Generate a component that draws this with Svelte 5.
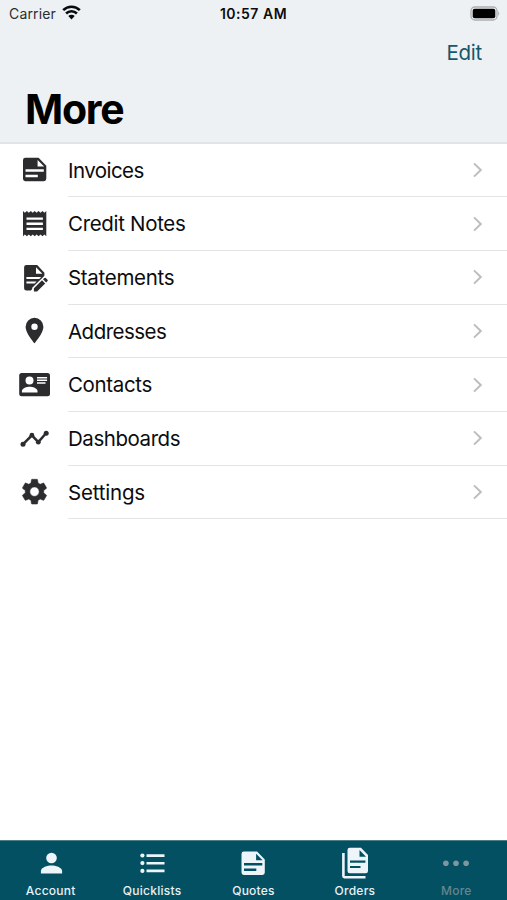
<script lang="ts">
	type Item = { id: string; label: string; spacing: number };

	const items: Item[] = [
		{ id: 'invoice', label: 'Invoices', spacing: -0.55 },
		{ id: 'receipt', label: 'Credit Notes', spacing: -0.32 },
		{ id: 'statement', label: 'Statements', spacing: -0.3 },
		{ id: 'pin', label: 'Addresses', spacing: -0.53 },
		{ id: 'contact', label: 'Contacts', spacing: -0.35 },
		{ id: 'chart', label: 'Dashboards', spacing: -0.45 },
		{ id: 'gear', label: 'Settings', spacing: -0.2 }
	];

	const tabs = [
		{ id: 'account', label: 'Account' },
		{ id: 'quicklists', label: 'Quicklists' },
		{ id: 'quotes', label: 'Quotes' },
		{ id: 'orders', label: 'Orders' },
		{ id: 'more', label: 'More' }
	];

	let active = $state('more');
</script>

{#snippet page()}
	<path
		fill-rule="evenodd"
		d="M2.5 0H15.6L23.3 7.9V21a2.4 2.4 0 0 1-2.4 2.4H2.5A2.4 2.4 0 0 1 0 21V2.4A2.4 2.4 0 0 1 2.5 0ZM14.6 2.2V8.7h6.5ZM2.5 11.4v2.5h18.3v-2.5ZM2.5 17v2.5h12.3V17Z"
	/>
{/snippet}

<div class="screen">
	<header>
		<div class="status">
			<div class="carrier">
				<span>Carrier</span>
				<svg width="19" height="15" viewBox="0 0 19 15">
					<g fill="none" stroke="#080a0c" stroke-width="2.6">
						<path d="M1.2 5.1a11.8 11.8 0 0 1 16.6 0" />
						<path d="M4.1 8.5a7.6 7.6 0 0 1 10.8 0" />
					</g>
					<path d="M6.3 11a4.6 4.6 0 0 1 6.4 0L9.5 14.4Z" fill="#080a0c" />
				</svg>
			</div>
			<span class="time">10:57 AM</span>
			<svg class="battery" width="31" height="15" viewBox="0 0 31 15">
				<rect x="1" y="1" width="26" height="13" rx="3.8" fill="#eef1f4" stroke="#acafb1" stroke-width="1.3" />
				<rect x="2.7" y="2.8" width="22.6" height="9.4" rx="2" />
				<path d="M28.2 5.2q2.1 2.3 0 4.6Z" fill="#acafb1" />
			</svg>
		</div>
		<div class="nav"><button>Edit</button></div>
		<h1>More</h1>
	</header>

	<main>
		{#each items as item (item.id)}
			<div class="row">
				<svg class="icon" width="33" height="32" viewBox="0 0 33 32">
					{#if item.id === 'invoice'}
						<g transform="translate(5 3.8)">{@render page()}</g>
					{:else if item.id === 'receipt'}
						<path
							fill-rule="evenodd"
							d="m5 3.1 1.9 1.7 2-1.7 1.9 1.7 2-1.7 1.9 1.7 2-1.7 1.9 1.7 2-1.7 1.9 1.7 2-1.7 1.9 1.7 1.9-1.7v25.2l-1.9-1.7-1.9 1.7-2-1.7-1.9 1.7-2-1.7-1.9 1.7-2-1.7-1.9 1.7-2-1.7-1.9 1.7-2-1.7L5 28.3ZM8.5 9.5v2.3h16.4V9.5Zm0 5.1v2.3h16.4v-2.3Zm0 5.1V22h16.4v-2.3Z"
						/>
					{:else if item.id === 'statement'}
						<path
							fill-rule="evenodd"
							d="M8.4 3h10.8l7.2 7.7v4.4L12.8 28.6H8.4a2.3 2.3 0 0 1-2.3-2.3v-21A2.3 2.3 0 0 1 8.4 3ZM18 5.2v6.5h6.4ZM8.4 15v2h12.8l2-2Zm0 4.6v2h8.2l2-2Z"
						/>
						<path d="M14.2 30.6v-4.8L27 13.2l3.6 1.6v15.8Z" fill="#fff" />
						<path
							d="m15.9 26.2 8.1-8 3.2 3.2-8.1 8h-3.2ZM25 17.3l1.4-1.3q.7-.7 1.4 0l1.7 1.7q.7.7 0 1.4l-1.3 1.4Z"
						/>
					{:else if item.id === 'pin'}
						<path
							fill-rule="evenodd"
							d="M16.5 2.8a8.9 8.9 0 0 0-8.9 8.9c0 6.6 8.9 16.6 8.9 16.6s8.9-10 8.9-16.6a8.9 8.9 0 0 0-8.9-8.9Zm0 5.8a3.2 3.2 0 1 1 0 6.4 3.2 3.2 0 0 1 0-6.4Z"
						/>
					{:else if item.id === 'contact'}
						<rect x="1.2" y="4" width="30.8" height="23.3" rx="2.5" />
						<g fill="#fff">
							<circle cx="11.5" cy="11.6" r="4" />
							<path d="M3.9 23.4v-1.5c0-2.7 5-4.2 7.8-4.2s7.8 1.5 7.8 4.2v1.5Z" />
							<path d="M19 7.9h10.1v1.5H19Zm0 2.6h10.1V12H19Zm0 2.7h8.5v1.5H19Z" />
						</g>
					{:else if item.id === 'chart'}
						<path d="m4.9 21.3 9-9 6.4 6.8 7.7-8.8" fill="none" stroke="#2c2c2e" stroke-width="2.5" />
						<circle cx="5" cy="21.2" r="2.5" />
						<circle cx="13.9" cy="12.2" r="2.4" />
						<circle cx="20.3" cy="19.2" r="2.4" />
						<circle cx="28.2" cy="10.2" r="2.5" />
					{:else}
						<path
							class="gear"
							transform="translate(1.02 .2) scale(1.29)"
							d="M19.14 12.94c.04-.3.06-.61.06-.94 0-.32-.02-.64-.07-.94l2.03-1.58c.18-.14.23-.41.12-.61l-1.92-3.32c-.12-.22-.37-.29-.59-.22l-2.39.96c-.5-.38-1.03-.7-1.62-.94l-.36-2.54c-.04-.24-.24-.41-.48-.41h-3.84c-.24 0-.43.17-.47.41l-.36 2.54c-.59.24-1.13.57-1.62.94l-2.39-.96c-.22-.08-.47 0-.59.22L2.74 8.87c-.12.21-.08.47.12.61l2.03 1.58c-.05.3-.09.63-.09.94s.02.64.07.94l-2.03 1.58c-.18.14-.23.41-.12.61l1.92 3.32c.12.22.37.29.59.22l2.39-.96c.5.38 1.03.7 1.62.94l.36 2.54c.05.24.24.41.48.41h3.84c.24 0 .44-.17.47-.41l.36-2.54c.59-.24 1.13-.56 1.62-.94l2.39.96c.22.08.47 0 .59-.22l1.92-3.32c.12-.22.07-.47-.12-.61l-2.01-1.58zM12 15.6c-1.98 0-3.6-1.62-3.6-3.6s1.62-3.6 3.6-3.6 3.6 1.62 3.6 3.6-1.62 3.6-3.6 3.6z"
						/>
					{/if}
				</svg>
				<div class="content">
					<span style:letter-spacing="{item.spacing}px">{item.label}</span>
					<svg width="10" height="16" viewBox="0 0 10 16">
						<path d="m1 1.4 6.8 6.6L1 14.6" fill="none" stroke="#bdbdc1" stroke-width="2" />
					</svg>
				</div>
			</div>
		{/each}
	</main>

	<nav class="tabs">
		{#each tabs as tab (tab.id)}
			<button class="tab" class:active={active === tab.id} onclick={() => (active = tab.id)}>
				<svg width="34" height="34" viewBox="0 0 34 34">
					{#if tab.id === 'account'}
						<circle cx="17.5" cy="12" r="5.3" />
						<path d="M6.9 27.4v-2.3c0-3.7 6.8-5.5 10.6-5.5s10.6 1.8 10.6 5.5v2.3Z" />
					{:else if tab.id === 'quicklists'}
						<circle cx="7.4" cy="9.5" r="2.1" />
						<circle cx="7.4" cy="17.1" r="2.1" />
						<circle cx="7.4" cy="24.9" r="2.1" />
						<path d="M11.5 8.2h18v2.7h-18Zm0 7.7h18v2.7h-18Zm0 7.7h18v2.7h-18Z" />
					{:else if tab.id === 'quotes'}
						<g transform="translate(5.5 5.6)">{@render page()}</g>
					{:else if tab.id === 'orders'}
						<path
							fill-rule="evenodd"
							d="M11.8 1.8H23l7 7.2v16a2.3 2.3 0 0 1-2.3 2.3H11.8a2.3 2.3 0 0 1-2.3-2.3V4.1a2.3 2.3 0 0 1 2.3-2.3ZM21.5 4v6.7H28ZM12 14.6v2.2h15.4v-2.2Zm0 5.3v2.2h10.5v-2.2Z"
						/>
						<path d="M4.1 7h2.6v22.9h20.8v2.5H6.6A2.4 2.4 0 0 1 4.1 30Z" />
					{:else}
						<circle cx="6.9" cy="17.3" r="2.8" />
						<circle cx="17" cy="17.3" r="2.8" />
						<circle cx="27.1" cy="17.3" r="2.8" />
					{/if}
				</svg>
				<span>{tab.label}</span>
			</button>
		{/each}
	</nav>
</div>

<style>
	:global(body) {
		margin: 0;
	}

	.screen {
		display: flex;
		flex-direction: column;
		width: 507px;
		height: 900px;
		overflow: hidden;
		background: #fff;
		color: #0c0c0d;
		font-family: Inter, 'Liberation Sans', sans-serif;
	}

	header {
		flex: none;
		box-sizing: border-box;
		height: 143.5px;
		background: #edf1f4;
		border-bottom: 2px solid #e1e4e7;
	}

	.status {
		display: grid;
		grid-template-columns: 1fr auto 1fr;
		align-items: center;
		height: 27px;
		padding: 0 6px 0 9px;
		font-size: 14px;
	}

	.carrier {
		display: flex;
		align-items: center;
		gap: 6px;
		color: #2a2d30;
		letter-spacing: 0.15px;
	}

	.carrier svg {
		margin-top: -2px;
	}

	.time {
		margin-left: -3px;
		font-weight: 600;
		letter-spacing: 0.5px;
	}

	.battery {
		justify-self: end;
	}

	button {
		padding: 0;
		border: 0;
		background: none;
		font: inherit;
	}

	.nav {
		display: flex;
		justify-content: flex-end;
		align-items: center;
		height: 50px;
		padding-right: 25px;
	}

	.nav button {
		color: #15586c;
		font-size: 20.5px;
		letter-spacing: -0.25px;
	}

	h1 {
		margin: 0;
		padding: 7px 0 0 25px;
		color: #000;
		font-size: 41px;
		font-weight: 700;
		line-height: 50px;
		letter-spacing: -1.3px;
	}

	main {
		flex: 1;
	}

	.row {
		display: flex;
		height: 53.7px;
		padding-left: 18px;
	}

	.icon {
		flex: none;
		align-self: center;
		fill: #2c2c2e;
	}

	.gear {
		stroke: #2c2c2e;
		stroke-width: 0.4;
	}

	.content {
		flex: 1;
		display: flex;
		justify-content: space-between;
		align-items: center;
		margin-left: 17px;
		padding-right: 24px;
		border-bottom: 1px solid #e4e4e6;
		font-size: 20.5px;
	}

	.content span {
		padding-top: 0.6px;
	}

	.tabs {
		flex: none;
		display: grid;
		grid-template-columns: repeat(5, 1fr);
		box-sizing: border-box;
		height: 60px;
		padding-top: 5px;
		background: #035062;
		border-top: 1px solid #4a7e8b;
	}

	.tab {
		display: flex;
		flex-direction: column;
		align-items: center;
		color: #e9f1f5;
		fill: #edf5fa;
		font-size: 12px;
		font-weight: 500;
		line-height: 14px;
		letter-spacing: 0.25px;
	}

	.tab svg {
		flex: none;
	}

	.tab.active {
		color: #65868f;
		fill: #80959d;
	}

	.tab span {
		margin-top: 4px;
	}
</style>
